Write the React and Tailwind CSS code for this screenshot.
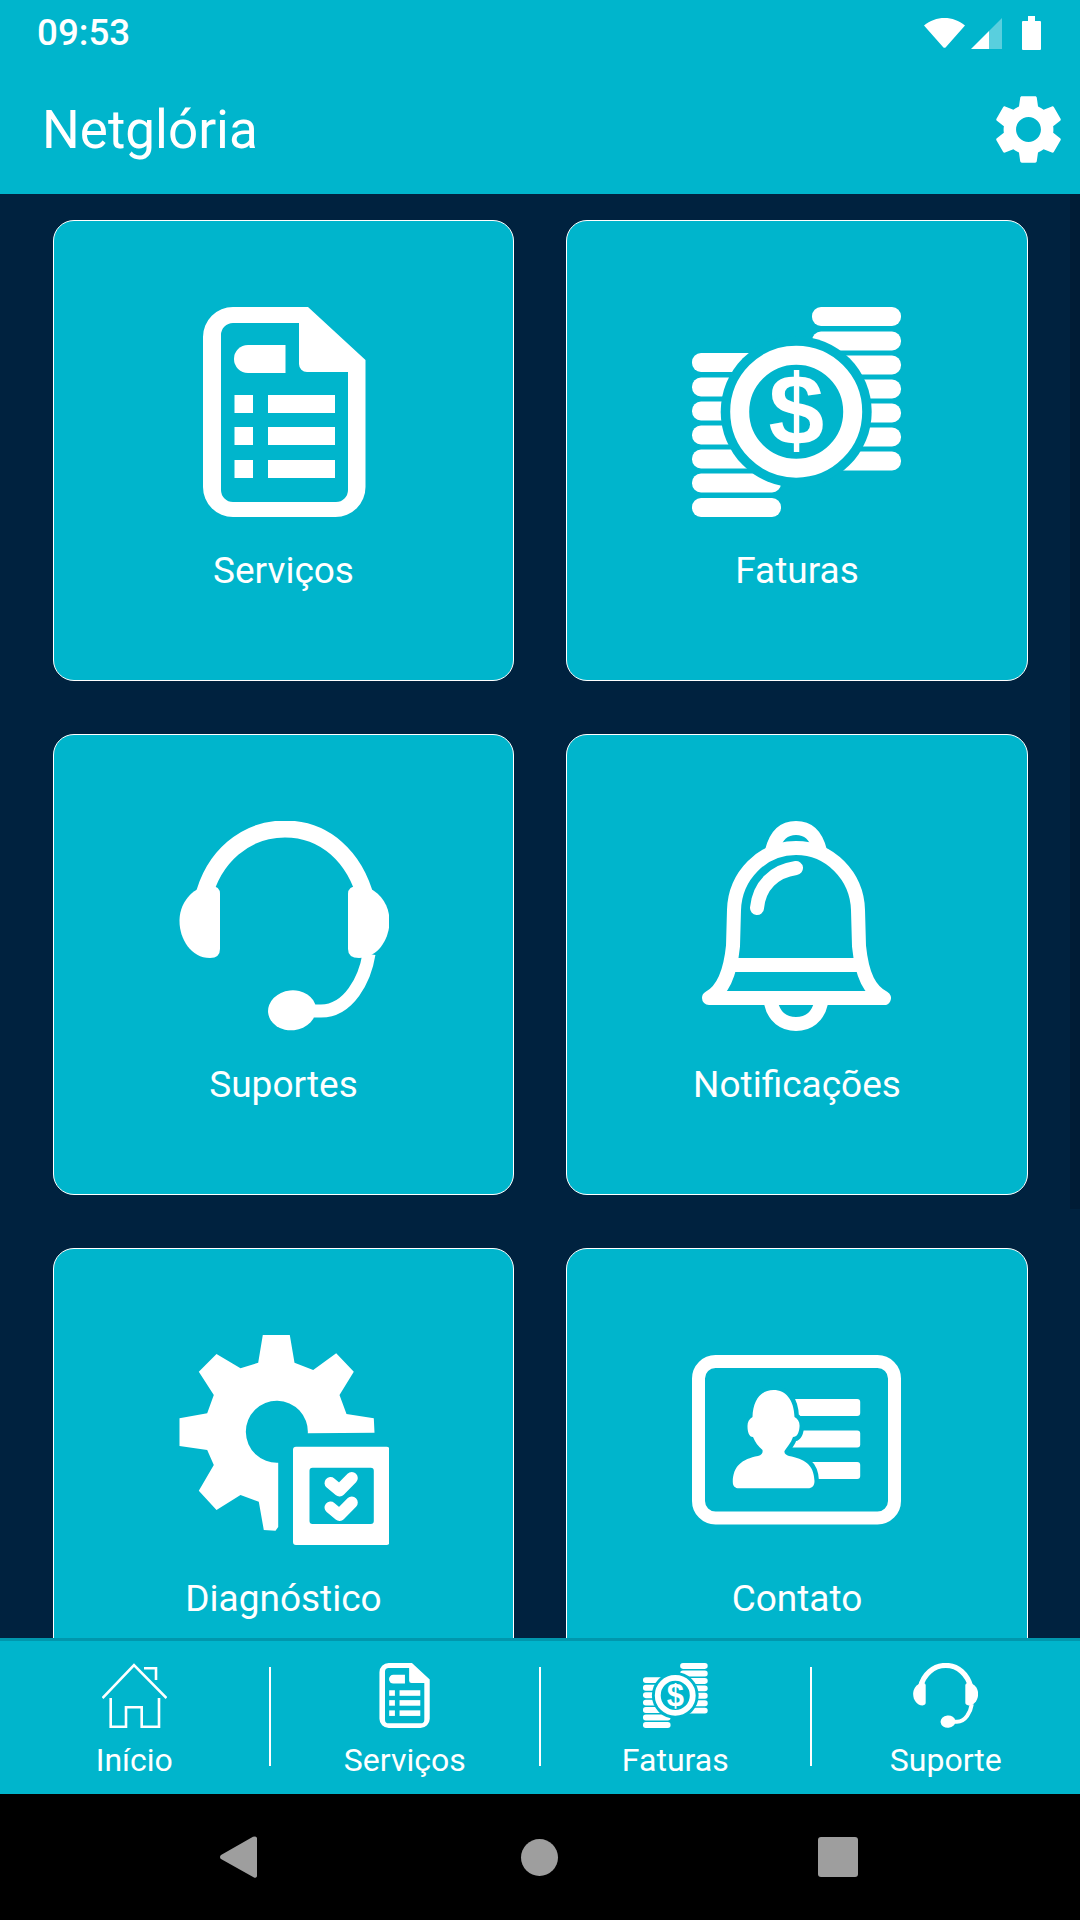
import React from 'react';

const CYAN = '#00b5cc';

function DocIcon({ className }) {
  return (
    <svg viewBox="0 0 210 210" className={className} fill="#fff">
      <path
        fillRule="evenodd"
        d="M54 0H129L186.5 53V180a30 30 0 0 1-30 30H54a30 30 0 0 1-30-30V30A30 30 0 0 1 54 0ZM54 16a12 12 0 0 0-12 12V183a12 12 0 0 0 12 12H157a12 12 0 0 0 12-12V65H128a8 8 0 0 1-8-8V16Z"
      />
      <path d="M69 38H106.5V66H69a14 14 0 0 1 0-28Z" />
      <rect x="55.5" y="88" width="18.5" height="18" />
      <rect x="55.5" y="120" width="18.5" height="18" />
      <rect x="55.5" y="153" width="18.5" height="18" />
      <rect x="89" y="88" width="67" height="18" />
      <rect x="89" y="120" width="67" height="18" />
      <rect x="89" y="153" width="67" height="18" />
    </svg>
  );
}

function CoinsIcon({ className }) {
  const right = [0, 24.5, 48.5, 72.5, 96.5, 120.5, 144.5];
  const left = [46, 70.5, 94.5, 118.5, 142.5, 166.5, 191];
  return (
    <svg viewBox="0 0 210 210" className={className} fill="#fff">
      {right.map((y) => (
        <rect key={y} x="120" y={y} width="89" height="19" rx="9" />
      ))}
      {left.map((y) => (
        <rect key={y} x="0" y={y} width="89" height="19" rx="9" />
      ))}
      <circle cx="104.2" cy="104.7" r="75.5" fill={CYAN} />
      <circle cx="104.2" cy="104.7" r="56.5" fill="none" stroke="#fff" strokeWidth="19" />
      <text
        x="104.2"
        y="138"
        textAnchor="middle"
        fontSize="100"
        fontWeight="700"
        fontFamily="'Liberation Sans', sans-serif"
      >
        $
      </text>
    </svg>
  );
}

function HeadsetIcon({ className }) {
  return (
    <svg viewBox="0 0 210 210" className={className} fill="#fff">
      <path d="M24 78C34 36 66 8 106 8C146 8 176 36 187 78" fill="none" stroke="#fff" strokeWidth="17" />
      <path d="M32 65Q41 65 41 73V128Q41 137 31 137C12 137 .5 118 .5 100C.5 84 10 70 26 65Z" />
      <path d="M179 65Q169 65 169 73V128Q169 137 180 137C199 137 210.5 118 210.5 100C210.5 84 201 70 185 65Z" />
      <path d="M190 133C186 158 170 190 142 190H135" fill="none" stroke="#fff" strokeWidth="13" />
      <ellipse cx="113" cy="189.3" rx="24" ry="20" transform="rotate(-6 113 189.3)" />
    </svg>
  );
}

function BellIcon({ className }) {
  return (
    <svg
      viewBox="0 0 210 210"
      className={className}
      fill="none"
      stroke="#fff"
      strokeWidth="14"
      strokeLinecap="round"
      strokeLinejoin="round"
    >
      <path d="M80 30C84 14 92 7 104 7C116 7 124 14 128 30" />
      <path d="M17 177C30 170 38 155 41 125L42 89C43 55 70 27 104 27C138 27 165 55 166 89L167 125C170 155 178 170 192 177Z" />
      <path d="M39 144H170" strokeLinecap="butt" />
      <path d="M79 182C82 196 92 203 104 203C116 203 126 196 129 182" />
      <path d="M65 87C67 65 82 50 104 47" />
    </svg>
  );
}

function GearCheckIcon({ className }) {
  return (
    <svg viewBox="0 0 210 210" className={className} fill="#fff">
      <path d="M83.8 0H110.8L115.5 27.7L134.2 35L157.2 18.3L174.8 36.7L160.5 60L167.5 79L194.8 83.3L195.5 97.7L128.8 98.3A31 31 0 1 0 99.2 127.7V192L96.5 195.7L84.8 195L79.8 166.7L61.5 160L37.5 175L19.8 155.7L34.8 130L28.2 115L.5 111V83.3L28.2 78.3L34.8 60L19.8 36.7L37.5 19L61.5 33.3L79.2 27.7Z" />
      <path
        fillRule="evenodd"
        d="M117 111.7H207.5a3 3 0 0 1 3 3V207a3 3 0 0 1-3 3H117a3 3 0 0 1-3-3V114.7a3 3 0 0 1 3-3ZM133.5 132.7a3 3 0 0 0-3 3V186a3 3 0 0 0 3 3H191.8a3 3 0 0 0 3-3V135.7a3 3 0 0 0-3-3Z"
      />
      <path
        d="M151.5 148L160.500 155.500L172.800 143M151.5 172.500L160.500 180L172.800 167.500"
        fill="none"
        stroke="#fff"
        strokeWidth="12"
        strokeLinecap="round"
        strokeLinejoin="round"
      />
    </svg>
  );
}

function ContactIcon({ className }) {
  return (
    <svg viewBox="0 0 210 210" className={className} fill="#fff">
      <rect x="6.5" y="26.5" width="196" height="156.5" rx="17" fill="none" stroke="#fff" strokeWidth="13" />
      <rect x="98" y="64" width="70.2" height="17" rx="3" />
      <rect x="98" y="95.5" width="70.2" height="17" rx="3" />
      <rect x="115" y="127" width="53.2" height="17" rx="3" />
      <path
        stroke={CYAN}
        strokeWidth="9"
        paintOrder="stroke"
        d="M81.5 55C94 55 102 65 102.5 82C106 84 108 87 107.5 92C107 98 105 102 101 102C99 108 95 112 92.5 116C92 119 94 120 97 121C112 124 122 129 122.5 146C122.5 151 120 153.3 116 153.3H47C43 153.3 40.8 151 40.8 147C41 131 50 124 66 121C70 120 71 118 70.5 115C66 111 63 107 61 102C57 102 55.5 97 55.5 91C55.5 87 57 84 60.5 82C61 65 69 55 81.5 55Z"
      />
    </svg>
  );
}

function HomeIcon({ className }) {
  return (
    <svg viewBox="0 0 65 65" className={className} fill="none" stroke="#fff" strokeWidth="2.6">
      <path d="M.5 35L32 2L64.5 35" />
      <path d="M42 5.3H54V17" />
      <path d="M8.7 35V63.7H24V44.3H39.7V63.7H57V35" />
    </svg>
  );
}

function SettingsIcon({ className }) {
  return (
    <svg viewBox="0 0 24 24" className={className} fill="#fff">
      <path d="M19.14 12.94c.04-.3.06-.61.06-.94 0-.32-.02-.64-.07-.94l2.03-1.58c.18-.14.23-.41.12-.61l-1.92-3.32c-.12-.22-.37-.29-.59-.22l-2.39.96c-.5-.38-1.03-.7-1.62-.94l-.36-2.54c-.04-.24-.24-.41-.48-.41h-3.84c-.24 0-.43.17-.47.41l-.36 2.54c-.59.24-1.13.57-1.62.94l-2.39-.96c-.22-.08-.47 0-.59.22L2.74 8.87c-.12.21-.08.47.12.61l2.03 1.58c-.05.3-.09.63-.09.94s.02.64.07.94l-2.03 1.58c-.18.14-.23.41-.12.61l1.92 3.32c.12.22.37.29.59.22l2.39-.96c.5.38 1.03.7 1.62.94l.36 2.54c.05.24.24.41.48.41h3.84c.24 0 .44-.17.47-.41l.36-2.54c.59-.24 1.13-.56 1.62-.94l2.39.96c.22.08.47 0 .59-.22l1.92-3.32c.12-.22.07-.47-.12-.61l-2.01-1.58zM12 15.6c-1.98 0-3.6-1.62-3.6-3.6s1.62-3.6 3.6-3.6 3.6 1.62 3.6 3.6-1.62 3.6-3.6 3.6z" />
    </svg>
  );
}

function StatusIcons() {
  return (
    <div className="flex items-center">
      <svg viewBox="0 0 41 30" className="w-[41px] h-[30px]" fill="#fff">
        <path d="M20.5 0C28 0 35 2.5 41 7.5L22 29a2 2 0 0 1-3 0L0 7.5C6 2.5 13 0 20.5 0Z" />
      </svg>
      <svg viewBox="0 0 31 31" className="ml-[6px] w-[31px] h-[31px]">
        <path d="M31 0V31H18V13Z" fill="#fff" fillOpacity=".35" />
        <path d="M18 13V31H0Z" fill="#fff" />
      </svg>
      <svg viewBox="0 0 19 34" className="ml-[20px] w-[19px] h-[34px]" fill="#fff">
        <path d="M6 0H13V5H18a1 1 0 0 1 1 1V33a1 1 0 0 1-1 1H1a1 1 0 0 1-1-1V6a1 1 0 0 1 1-1H6Z" />
      </svg>
    </div>
  );
}

const cards = [
  { label: 'Serviços', Icon: DocIcon },
  { label: 'Faturas', Icon: CoinsIcon },
  { label: 'Suportes', Icon: HeadsetIcon },
  { label: 'Notificações', Icon: BellIcon },
  { label: 'Diagnóstico', Icon: GearCheckIcon },
  { label: 'Contato', Icon: ContactIcon },
];

const tabs = [
  { label: 'Início', Icon: HomeIcon },
  { label: 'Serviços', Icon: DocIcon },
  { label: 'Faturas', Icon: CoinsIcon },
  { label: 'Suporte', Icon: HeadsetIcon },
];

export default function App() {
  return (
    <div className="w-[1080px] h-[1920px] flex flex-col overflow-hidden bg-black text-white font-['Roboto',sans-serif]">
      <header className="h-[194px] shrink-0 bg-[#00b5cc]">
        <div className="h-[66px] flex items-center justify-between pl-[37px] pr-[39px]">
          <span className="text-[36.75px] leading-[44px] font-medium">09:53</span>
          <StatusIcons />
        </div>
        <div className="h-[128px] flex items-center justify-between pl-[42px] pr-[10px]">
          <h1 className="text-[53px] leading-[62px] font-normal">Netglória</h1>
          <SettingsIcon className="w-[83px] h-[83px] -mt-[2px]" />
        </div>
      </header>

      <main className="relative flex-1 min-h-0 overflow-hidden bg-[#00223f] pt-[26px] pl-[53px]">
        <div className="grid grid-cols-[461px_462px] gap-x-[52px] gap-y-[53px]">
          {cards.map(({ label, Icon }) => (
            <div
              key={label}
              className="h-[461px] flex flex-col items-center pt-[86px] bg-[#00b5cc] border border-white rounded-[21px]"
            >
              <Icon className="w-[210px] h-[210px] shrink-0" />
              <span className="mt-[32px] text-[37px] leading-[44px]">{label}</span>
            </div>
          ))}
        </div>
        <div className="absolute top-0 right-0 w-[10px] h-[1015px] bg-[#001c36]" />
      </main>

      <nav className="h-[156px] shrink-0 flex items-start bg-[#00b5cc] border-t-[3px] border-[#0097ad] pt-[26px]">
        {tabs.map(({ label, Icon }, i) => (
          <React.Fragment key={label}>
            {i > 0 && <div className="w-[2px] h-[99px] bg-white shrink-0" />}
            <div className="flex-1 flex flex-col items-center -mt-[4px]">
              <Icon className="w-[65px] h-[65px] shrink-0" />
              <span className="mt-[14px] text-[32px] leading-[37px]">{label}</span>
            </div>
          </React.Fragment>
        ))}
      </nav>

      <div className="h-[126px] shrink-0 flex items-center justify-center pr-[2px] bg-black">
        <svg viewBox="0 0 37 42" className="w-[37px] h-[42px]" fill="#9e9e9e">
          <path d="M35 .5a2 2 0 0 1 2 1.5V40a2 2 0 0 1-3 1.5L1 23a2.500 2.500 0 0 1 0-4L33 .8Z" />
        </svg>
        <div className="ml-[264px] w-[37px] h-[37px] rounded-full bg-[#9e9e9e]" />
        <div className="ml-[260px] w-[40px] h-[40px] rounded-[3px] bg-[#9e9e9e]" />
      </div>
    </div>
  );
}
